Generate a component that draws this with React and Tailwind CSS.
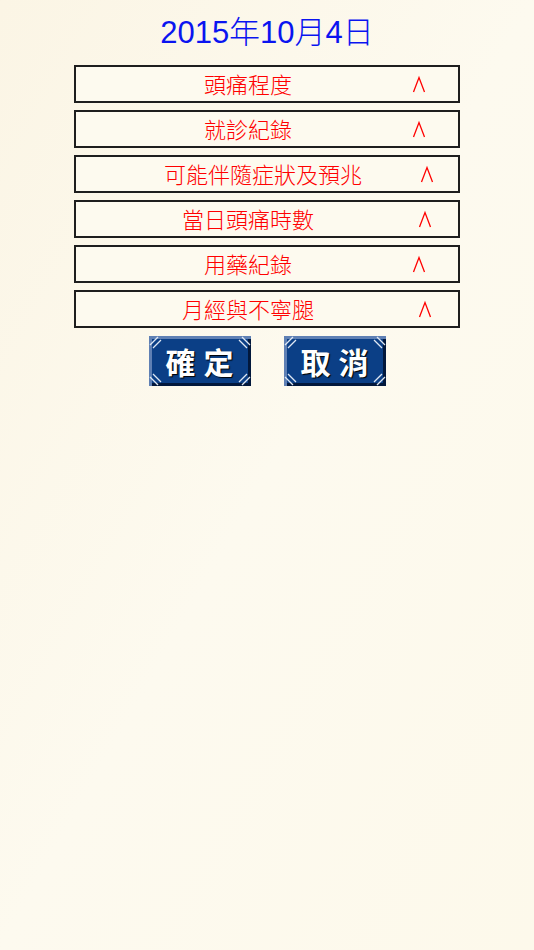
const FONT = { fontFamily: '"Noto Sans CJK TC", "Noto Sans", sans-serif' };

const rows = [
  { label: '頭痛程度', pl: 'pl-[128px]', gap: 'ml-[120px]' },
  { label: '就診紀錄', pl: 'pl-[128px]', gap: 'ml-[120px]' },
  { label: '可能伴隨症狀及預兆', pl: 'pl-[88px]', gap: 'ml-[58px]' },
  { label: '當日頭痛時數', pl: 'pl-[106px]', gap: 'ml-[104px]' },
  { label: '用藥紀錄', pl: 'pl-[128px]', gap: 'ml-[120px]' },
  { label: '月經與不寧腿', pl: 'pl-[106px]', gap: 'ml-[104px]' },
];

function Caret() {
  return (
    <svg width="14" height="18" viewBox="0 0 14 18" className="shrink-0">
      <path d="M1.5 17 L7 2.5 L12.5 17" fill="none" stroke="#ff0000" strokeWidth="1.3" />
    </svg>
  );
}

function SectionRow({ label, pl, gap }) {
  return (
    <div className={`flex h-[38px] w-[386px] items-center border-2 border-[#1e1e1e] bg-[#fdfaef] ${pl}`}>
      <span className="-mt-[2px] text-[22px] font-light leading-none text-[#ff0000]" style={FONT}>{label}</span>
      <span className={gap}>
        <Caret />
      </span>
    </div>
  );
}

function Corner({ className }) {
  return (
    <svg width="16" height="16" viewBox="0 0 16 16" className={`absolute ${className}`}>
      <path d="M1 9 L9 1 M4 12 L12 4" stroke="#dfe8f4" strokeWidth="1.3" />
    </svg>
  );
}

function BlueButton({ label }) {
  return (
    <div className="relative flex h-[50px] w-[102px] items-center justify-center bg-[#0b3f86] shadow-[inset_3px_3px_0_#5f80b4,inset_-3px_-3px_0_#02183c]">
      <Corner className="left-0 top-0" />
      <Corner className="right-0 top-0 -scale-x-100" />
      <Corner className="bottom-0 left-0 -scale-y-100" />
      <Corner className="bottom-0 right-0 -scale-100" />
      <span
        className="pl-[8px] text-[30px] font-bold leading-none tracking-[8px] text-white [text-shadow:1px_1px_1px_#000]"
        style={FONT}
      >
        {label}
      </span>
    </div>
  );
}

export default function App() {
  return (
    <div className="min-h-[950px] w-full bg-gradient-to-br from-[#fbf5e5] via-[#fdfaef] to-[#fdf9eb]">
      <div className="flex flex-col items-center pt-[14px]">
        <h1
          className="text-[31px] font-light leading-[38px] text-[#0a14f0]"
          style={{ fontFamily: '"Liberation Sans", "Noto Sans CJK TC", sans-serif' }}
        >
          2015年10月4日
        </h1>
        <div className="mt-[13px] flex flex-col gap-[7px]">
          {rows.map((r) => (
            <SectionRow key={r.label} {...r} />
          ))}
        </div>
        <div className="mt-[8px] flex gap-[33px]">
          <BlueButton label="確定" />
          <BlueButton label="取消" />
        </div>
      </div>
    </div>
  );
}
